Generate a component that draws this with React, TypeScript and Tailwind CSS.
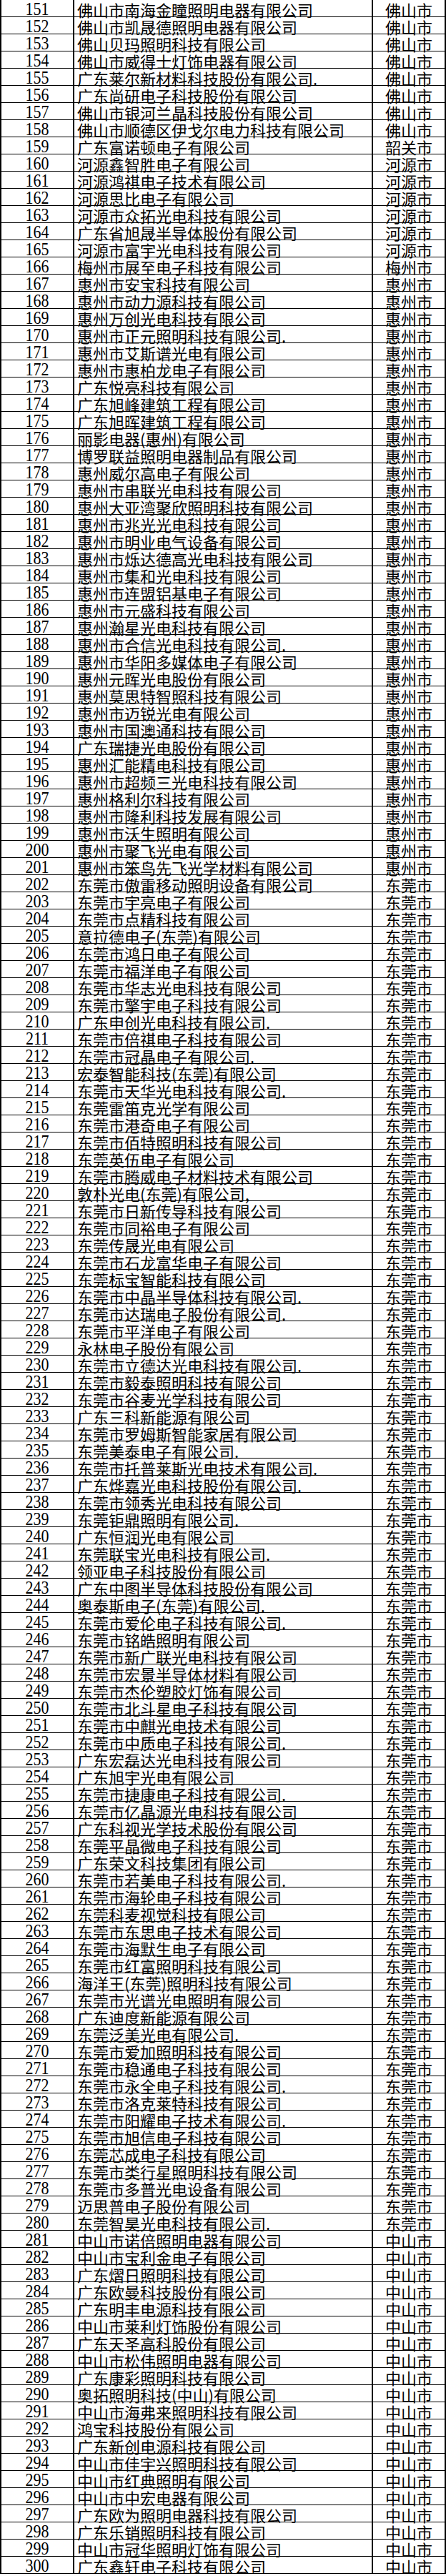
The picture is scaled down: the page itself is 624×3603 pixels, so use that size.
import React from "react";

const names: string[] = [
  "佛山市南海金瞳照明电器有限公司",
  "佛山市凯晟德照明电器有限公司",
  "佛山贝玛照明科技有限公司",
  "佛山市威得士灯饰电器有限公司",
  "广东莱尔新材料科技股份有限公司.",
  "广东尚研电子科技股份有限公司",
  "佛山市银河兰晶科技股份有限公司",
  "佛山市顺德区伊戈尔电力科技有限公司",
  "广东富诺顿电子有限公司",
  "河源鑫智胜电子有限公司",
  "河源鸿祺电子技术有限公司",
  "河源思比电子有限公司",
  "河源市众拓光电科技有限公司",
  "广东省旭晟半导体股份有限公司",
  "河源市富宇光电科技有限公司",
  "梅州市展至电子科技有限公司",
  "惠州市安宝科技有限公司",
  "惠州市动力源科技有限公司",
  "惠州万创光电科技有限公司",
  "惠州市正元照明科技有限公司.",
  "惠州市艾斯谱光电有限公司",
  "惠州市惠柏龙电子有限公司",
  "广东悦亮科技有限公司",
  "广东旭峰建筑工程有限公司",
  "广东旭晖建筑工程有限公司",
  "丽影电器(惠州)有限公司",
  "博罗联益照明电器制品有限公司",
  "惠州威尔高电子有限公司",
  "惠州市串联光电科技有限公司",
  "惠州大亚湾聚欣照明科技有限公司",
  "惠州市兆光光电科技有限公司",
  "惠州市明业电气设备有限公司",
  "惠州市烁达德高光电科技有限公司",
  "惠州市集和光电科技有限公司",
  "惠州市连盟铝基电子有限公司",
  "惠州市元盛科技有限公司",
  "惠州瀚星光电科技有限公司",
  "惠州市合信光电科技有限公司.",
  "惠州市华阳多媒体电子有限公司",
  "惠州元晖光电股份有限公司",
  "惠州莫思特智照科技有限公司",
  "惠州市迈锐光电有限公司",
  "惠州市国澳通科技有限公司",
  "广东瑞捷光电股份有限公司",
  "惠州汇能精电科技有限公司",
  "惠州市超频三光电科技有限公司",
  "惠州格利尔科技有限公司",
  "惠州市隆利科技发展有限公司",
  "惠州市沃生照明有限公司",
  "惠州市聚飞光电有限公司",
  "惠州市笨鸟先飞光学材料有限公司",
  "东莞市傲雷移动照明设备有限公司",
  "东莞市宇亮电子有限公司",
  "东莞市点精科技有限公司",
  "意拉德电子(东莞)有限公司",
  "东莞市鸿日电子有限公司",
  "东莞市福洋电子有限公司",
  "东莞市华志光电科技有限公司",
  "东莞市擎宇电子科技有限公司",
  "广东申创光电科技有限公司.",
  "东莞市倍祺电子科技有限公司",
  "东莞市冠晶电子有限公司.",
  "宏泰智能科技(东莞)有限公司",
  "东莞市天华光电科技有限公司.",
  "东莞雷笛克光学有限公司",
  "东莞市港奇电子有限公司",
  "东莞市佰特照明科技有限公司",
  "东莞英伍电子有限公司",
  "东莞市腾威电子材料技术有限公司",
  "敦朴光电(东莞)有限公司,",
  "东莞市日新传导科技有限公司",
  "东莞市同裕电子有限公司",
  "东莞传晟光电有限公司",
  "东莞市石龙富华电子有限公司",
  "东莞标宝智能科技有限公司",
  "东莞市中晶半导体科技有限公司.",
  "东莞市达瑞电子股份有限公司.",
  "东莞市平洋电子有限公司",
  "永林电子股份有限公司",
  "东莞市立德达光电科技有限公司.",
  "东莞市毅泰照明科技有限公司",
  "东莞市谷麦光学科技有限公司",
  "广东三科新能源有限公司",
  "东莞市罗姆斯智能家居有限公司",
  "东莞美泰电子有限公司.",
  "东莞市托普莱斯光电技术有限公司.",
  "广东烨嘉光电科技股份有限公司.",
  "东莞市领秀光电科技有限公司",
  "东莞钜鼎照明有限公司.",
  "广东恒润光电有限公司",
  "东莞联宝光电科技有限公司.",
  "领亚电子科技股份有限公司",
  "广东中图半导体科技股份有限公司",
  "奥泰斯电子(东莞)有限公司.",
  "东莞市爱伦电子科技有限公司.",
  "东莞市铭皓照明有限公司",
  "东莞市新广联光电科技有限公司",
  "东莞市宏景半导体材料有限公司",
  "东莞市杰伦塑胶灯饰有限公司",
  "东莞市北斗星电子科技有限公司",
  "东莞市中麒光电技术有限公司",
  "东莞市中质电子科技有限公司.",
  "广东宏磊达光电科技有限公司",
  "广东旭宇光电有限公司",
  "东莞市捷康电子科技有限公司.",
  "东莞市亿晶源光电科技有限公司",
  "广东科视光学技术股份有限公司",
  "东莞平晶微电子科技有限公司",
  "广东荣文科技集团有限公司",
  "东莞市若美电子科技有限公司.",
  "东莞市海轮电子科技有限公司",
  "东莞科麦视觉科技有限公司",
  "东莞市东思电子技术有限公司",
  "东莞市海默生电子有限公司",
  "东莞市红富照明科技有限公司",
  "海洋王(东莞)照明科技有限公司",
  "东莞市光谱光电照明有限公司",
  "广东迪度新能源有限公司",
  "东莞泛美光电有限公司.",
  "东莞市爱加照明科技有限公司",
  "东莞市稳通电子科技有限公司",
  "东莞市永全电子科技有限公司.",
  "东莞市洛克莱特科技有限公司",
  "东莞市阳耀电子技术有限公司.",
  "东莞市旭信电子科技有限公司",
  "东莞芯成电子科技有限公司",
  "东莞市类行星照明科技有限公司",
  "东莞市多普光电设备有限公司",
  "迈思普电子股份有限公司",
  "东莞智昊光电科技有限公司.",
  "中山市诺倍照明电器有限公司",
  "中山市宝利金电子有限公司",
  "广东熠日照明科技有限公司",
  "广东欧曼科技股份有限公司",
  "广东明丰电源科技有限公司",
  "中山市莱利灯饰股份有限公司",
  "广东天圣高科股份有限公司",
  "中山市松伟照明电器有限公司",
  "广东康彩照明科技有限公司",
  "奥拓照明科技(中山)有限公司",
  "中山市海弗来照明科技有限公司",
  "鸿宝科技股份有限公司",
  "广东新创电源科技有限公司",
  "中山市佳宇兴照明科技有限公司",
  "中山市红典照明有限公司",
  "中山市中宏电器有限公司",
  "广东欧为照明电器科技有限公司",
  "广东乐销照明科技有限公司",
  "中山市冠华照明灯饰有限公司",
  "广东鑫轩电子科技有限公司",
];

function cityFor(n: number): string {
  if (n <= 158) return "佛山市";
  if (n === 159) return "韶关市";
  if (n <= 165) return "河源市";
  if (n === 166) return "梅州市";
  if (n <= 201) return "惠州市";
  if (n <= 280) return "东莞市";
  return "中山市";
}

const cjk = "font-['Noto_Sans_CJK_SC',sans-serif]";

export default function App() {
  return (
    <div className="w-[624px] bg-white text-black">
      {names.map((name, i) => {
        const n = 151 + i;
        return (
          <div
            key={n}
            className="flex h-[24px] border-b border-black border-l-2 border-r-2 box-border"
          >
            <div className="w-[100px] shrink-0 flex items-start justify-center leading-[24px]">
              <span className="inline-block translate-y-[1px] scale-y-[1.15] font-['Liberation_Serif',serif] text-[22px] leading-[24px]">
                {n}
              </span>
            </div>
            <div
              className={`w-[418px] shrink-0 border-l-2 border-black pl-[4px] whitespace-nowrap text-[22px] leading-[24px] ${cjk}`}
            >
              <span className="inline-block translate-y-[1px]">{name}</span>
            </div>
            <div
              className={`flex-1 border-l-2 border-black text-center whitespace-nowrap text-[22px] leading-[24px] ${cjk}`}
            >
              <span className="inline-block translate-y-[1px]">{cityFor(n)}</span>
            </div>
          </div>
        );
      })}
    </div>
  );
}
